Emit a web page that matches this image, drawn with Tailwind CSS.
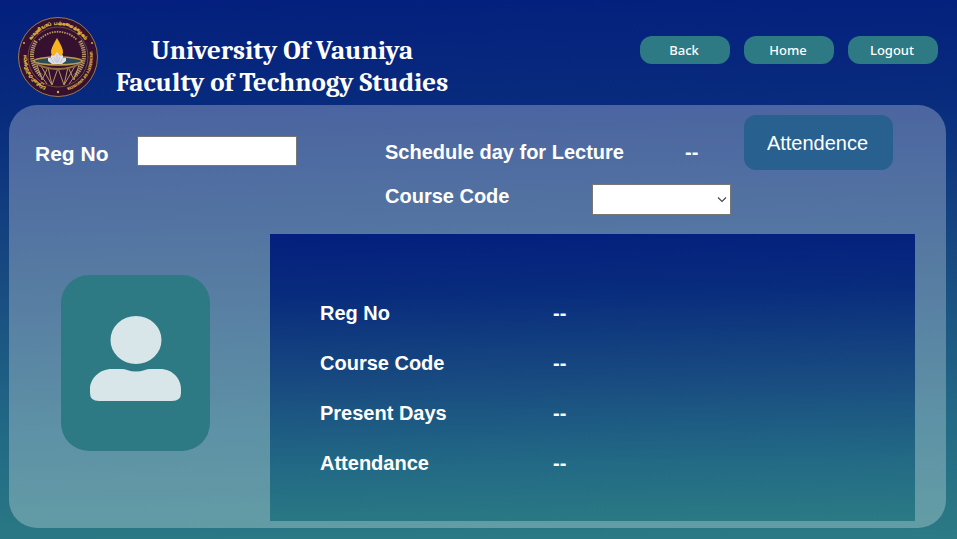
<!DOCTYPE html>
<html lang="en">
<head>
<meta charset="utf-8">
<meta name="viewport" content="width=device-width, initial-scale=1">
<title>Attendance</title>
<script src="https://cdn.jsdelivr.net/npm/@tailwindcss/browser@4"></script>
</head>
<body class="flex min-h-screen flex-col bg-[linear-gradient(179deg,#041f7e_0%,#082b7d_20%,#184a80_50%,#226985_78%,#2b7a84_100%)] px-[9px] pb-[11px] font-['Liberation_Sans',Arial,sans-serif] text-white">
<header class="flex h-[105px] shrink-0 items-start pr-[10px] pl-2">
  <svg class="mt-4 size-[82px] shrink-0" viewBox="0 0 82 82" role="img" aria-label="University of Vavuniya crest">
    <defs>
      <path id="arcTop" d="M16.500 61.500A32 32 0 1 1 65.500 61.500"/>
      <path id="arcRight" d="M71.100 30A32 32 0 0 1 44 72.900"/>
      <path id="arcLeft" d="M38 72.900A32 32 0 0 1 10.900 30"/>
    </defs>
    <circle cx="41" cy="41" r="39.500" fill="#35112f" stroke="#9b7a50" stroke-width="1"/>
    <circle cx="41" cy="41" r="30" fill="#35112f" stroke="#93704a" stroke-width=".6"/>
    <g fill="#dcae42" stroke="#dcae42" stroke-width=".2" font-family="Noto Sans, sans-serif" font-weight="700">
      <text font-size="4.800"><textPath href="#arcTop" startOffset="50%" text-anchor="middle">வவுனியாப் பல்கலைக்கழகம்</textPath></text>
      <text font-size="3.600"><textPath href="#arcRight" startOffset="50%" text-anchor="middle">UNIVERSITY OF VAVUNIYA</textPath></text>
      <text font-size="4.200"><textPath href="#arcLeft" startOffset="50%" text-anchor="middle">වවුනියාව විශ්වවිද්‍යාලය</textPath></text>
    </g>
    <path d="M22 24A26 26 0 0 1 60 24" fill="none" stroke="#b9955a" stroke-width="1.800" stroke-dasharray="1.500 1"/>
    <g fill="none" stroke="#b59566">
      <path d="M19 25Q9 43 24 60M63 25Q73 43 58 60" stroke-width="4" stroke-dasharray="1.400 .8"/>
      <path d="M19 46L25 64L31 51L35 69L41 52L47 69L51 51L57 64L63 46M24 50L35 69M58 50L47 69M22 57L30 68M60 57L52 68" stroke-width="1"/>
    </g>
    <ellipse cx="41" cy="45" rx="24" ry="4" fill="#2c4b58" stroke="#c39b4e" stroke-width="1.600"/>
    <path d="M17 46Q41 58 65 46Q60 53 41 54Q22 53 17 46Z" fill="#8f6d42"/>
    <path d="M40 22Q34 32 34 36Q34 41 40 43Q46 41 46 36Q46 32 40 22Z" fill="#f7b31f"/>
    <path d="M31 45L31 42L34 42L34 39L37 40L40 36L43 40L46 39L46 42L49 42L49 45L45 48H35Z" fill="#dedfe9"/>
    <path d="M34 42L37 47M40 38V47M46 42L43 47M37 41L39 46M43 41L41 46" fill="none" stroke="#9da4bb" stroke-width=".5"/>
    <g fill="#d4ab55"><circle cx="7" cy="27" r="1"/><circle cx="75" cy="27" r="1"/><circle cx="41" cy="76" r="1.200"/></g>
  </svg>
  <h1 class="mt-[35px] ml-[17px] text-center font-['Cambria','Caladea','Liberation_Serif',serif] text-[27px] leading-8 font-bold whitespace-nowrap">University Of Vauniya<br>Faculty of Technogy Studies</h1>
  <nav class="mt-9 ml-auto flex gap-[14px] font-['Noto_Sans','Open_Sans',sans-serif] text-[13px] font-medium">
    <button type="button" class="h-7 w-[90px] rounded-xl bg-[#2d7984] pt-[2px] pr-[2px]">Back</button>
    <button type="button" class="h-7 w-[90px] rounded-xl bg-[#2d7984] pt-[2px] pr-[2px]">Home</button>
    <button type="button" class="h-7 w-[90px] rounded-xl bg-[#2d7984] pt-[2px] pr-[2px]">Logout</button>
  </nav>
</header>
<main class="mr-[2px] flex flex-1 flex-col rounded-[28px] bg-white/27 text-xl font-bold">
  <form class="flex h-[129px] shrink-0 items-start pr-[53px] pl-[26px]">
    <label for="reg" class="mt-[34px] w-[102px] text-[21px] leading-[30px]">Reg No</label>
    <input id="reg" type="text" class="mt-[31px] h-[30px] w-40 border border-[#777] bg-white px-2 font-normal text-black">
    <div class="mt-8 ml-[88px] w-[346px]">
      <div class="flex h-[30px] items-center"><span class="w-[300px]">Schedule day for Lecture</span><output>--</output></div>
      <div class="mt-[14px] flex items-start">
        <label for="course" class="w-[207px] leading-[30px]">Course Code</label>
        <div class="relative mt-[3px]">
          <select id="course" class="block h-[31px] w-[139px] appearance-none border border-[#777] bg-white px-2 text-base font-normal text-black"><option></option></select>
          <svg class="pointer-events-none absolute top-3 right-1 h-2 w-[10px]" viewBox="0 0 10 8" fill="none" stroke="#444" stroke-width="1.100"><path d="M1 1.500L5 5.500L9 1.500"/></svg>
        </div>
      </div>
    </div>
    <button type="button" class="mt-[10px] ml-auto h-[55px] w-[149px] rounded-xl bg-[#286090] pr-[2px] font-normal">Attendence</button>
  </form>
  <div class="mb-[7px] flex flex-1 items-start pr-[31px] pl-[52px]">
    <div class="mt-[41px] flex h-[176px] w-[149px] shrink-0 justify-center rounded-[28px] bg-[#2d7984]">
      <svg class="mt-10 h-[88px] w-[92px]" viewBox="0 0 92 88" fill="#d8e6e9" role="img" aria-label="Student photo"><ellipse cx="46" cy="25" rx="25.500" ry="24"/><path d="M22 54H32Q35 54 37 55Q46 58 55 55Q57 54 60 54H70C83 54 91 64 91 74V78Q91 86 82 86H9Q0 86 0 78V74C0 64 9 54 22 54Z"/></svg>
    </div>
    <dl class="ml-[60px] grid flex-1 grid-cols-[233px_1fr] content-start gap-y-5 self-stretch bg-[linear-gradient(179deg,#041f7e_0%,#082b7d_20%,#184a80_50%,#226985_78%,#2b7a84_100%)] pt-16 pl-[50px] leading-[30px]">
      <dt>Reg No</dt><dd>--</dd>
      <dt>Course Code</dt><dd>--</dd>
      <dt>Present Days</dt><dd>--</dd>
      <dt>Attendance</dt><dd>--</dd>
    </dl>
  </div>
</main>
</body>
</html>
